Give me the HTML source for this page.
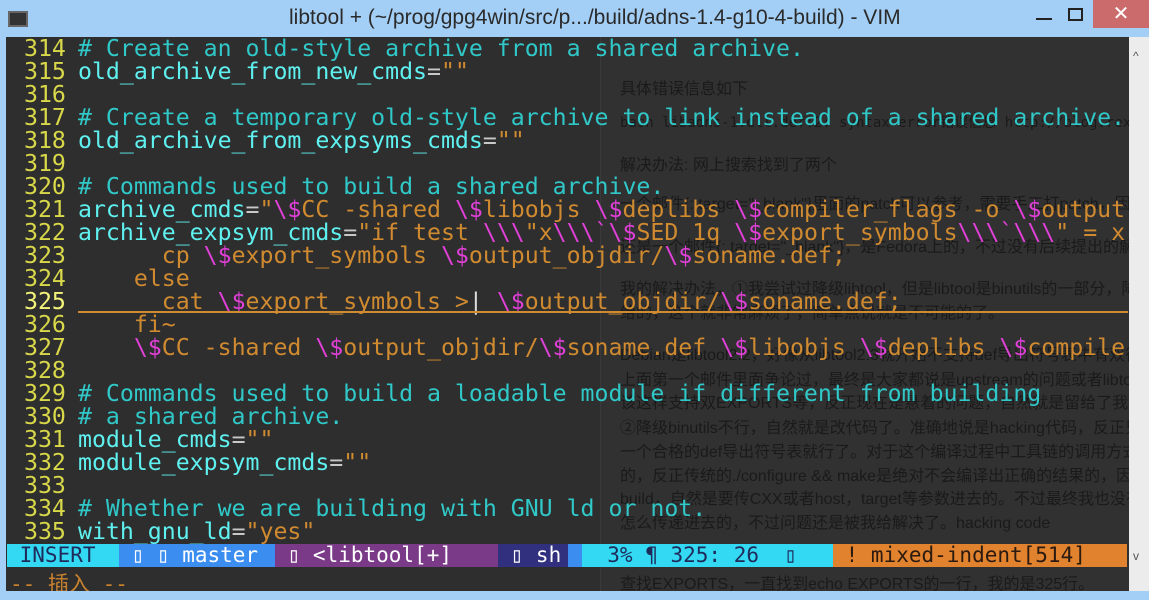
<!DOCTYPE html>
<html><head><meta charset="utf-8"><style>
*{margin:0;padding:0;box-sizing:border-box}
body{width:1149px;height:600px;overflow:hidden;background:#a3cff6;position:relative;font-family:"Liberation Sans","Noto Sans CJK SC",sans-serif}
.title{position:absolute;left:0;top:0;width:1149px;height:37px;background:#a3cff6}
.title .t{position:absolute;left:289px;top:6px;font-size:21px;color:#2a2a2a;white-space:nowrap}
.close{position:absolute;left:1093px;top:0;width:56px;height:28px;background:#cc6b6b;color:#fff;font-size:20px;text-align:center;line-height:28px}
.vim{position:absolute;left:6px;top:37px;width:1123px;height:554px;background:#2e2e2e;overflow:hidden}
.rbg{position:absolute;left:594px;top:0;width:529px;height:554px;background:#313131;border-left:1px solid #3a3a3a}
.scroll{position:absolute;left:1129px;top:37px;width:20px;height:554px;background:#ececec}
.bg{position:absolute;color:#1a1a1a;font-size:16px;white-space:nowrap;font-family:"Liberation Sans","Noto Sans CJK SC",sans-serif}
.code{position:absolute;left:0;top:0;font-family:"DejaVu Sans Mono",monospace;font-size:23.2px;line-height:23px;white-space:pre}
.ln{position:absolute;left:18px;width:50px;color:#d8d84a}
.tx{position:absolute;left:72px;color:#5ff0f0}
.c{color:#30c8c8}.s{color:#d08a30}.m{color:#e040d8}.w{color:#c8c8c8}
.st{position:absolute;top:507px;height:23px;font-family:"DejaVu Sans Mono",monospace;font-size:21px;line-height:23px;white-space:pre;overflow:hidden}
</style></head><body>
<div class="title">
<div style="position:absolute;left:8px;top:11px;width:20px;height:16px;background:#333;border:2px solid #666"></div>
<div class="t">libtool + (~/prog/gpg4win/src/p.../build/adns-1.4-g10-4-build) - VIM</div>
<div style="position:absolute;left:1036px;top:18px;width:16px;height:2px;background:#222"></div>
<div style="position:absolute;left:1068px;top:8px;width:15px;height:13px;border:2px solid #222"></div>
<div class="close">✕</div>
</div>
<div class="vim">
<div class="rbg"></div>
<div class="bg" style="left:614px;top:38px">具体错误信息如下</div>
<div class="bg" style="left:614px;top:75px;font-family:'DejaVu Sans Mono',monospace;font-size:14px">bash libadns-1.dll.def:2: syntax error错误信息 http://blog.rexdf.org MyBlog /</div>
<div class="bg" style="left:614px;top:114px">解决办法: 网上搜索找到了两个</div>
<div class="bg" style="left:614px;top:153px">一个邮件{: target="_blank"}里面的patch可以参考，需要手工打patch，因为行号似乎和</div>
<div class="bg" style="left:614px;top:196px">还是一个邮件{: target="_blank"}，是Fedora上的，不过没有后续提出的解决办法。</div>
<div class="bg" style="left:614px;top:238px">我的解决办法，①我尝试过降级libtool，但是libtool是binutils的一部分，降级binutils需要</div>
<div class="bg" style="left:614px;top:262px">给的，这个就非常麻烦了，简单点说就是不可能的了。</div>
<div class="bg" style="left:614px;top:304px">Debian是libtool2.2，好像从libtool2.3就开始不支持def导出符号表中有双行EXPORTS，这</div>
<div class="bg" style="left:614px;top:329px">上面第一个邮件里面争论过，最终是大家都说是upstream的问题或者libtool的错误，反</div>
<div class="bg" style="left:614px;top:352px">该这样支持双EXPORTS等，反正现在是悬着的问题，自然就是留给了我们编译用户了。</div>
<div class="bg" style="left:614px;top:377px">②降级binutils不行，自然就是改代码了。准确地说是hacking代码，反正只要欺骗libtool</div>
<div class="bg" style="left:614px;top:401px">一个合格的def导出符号表就行了。对于这个编译过程中工具链的调用方式的真的是没有</div>
<div class="bg" style="left:614px;top:425px">的，反正传统的./configure &amp;&amp; make是绝对不会编译出正确的结果的，因为是cross-</div>
<div class="bg" style="left:614px;top:448px">build，自然是要传CXX或者host，target等参数进去的。不过最终我也没有搞懂这些参</div>
<div class="bg" style="left:614px;top:472px">怎么传递进去的，不过问题还是被我给解决了。hacking code</div>
<div class="bg" style="left:614px;top:533px">查找EXPORTS，一直找到echo EXPORTS的一行，我的是325行。</div>
<div class="code">
<div class="ln" style="top:0">314</div><div class="tx c" style="top:0"># Create an old-style archive from a shared archive.</div>
<div class="ln" style="top:23px">315</div><div class="tx" style="top:23px">old_archive_from_new_cmds<span class="w">=</span><span class="s">""</span></div>
<div class="ln" style="top:46px">316</div>
<div class="ln" style="top:69px">317</div><div class="tx c" style="top:69px"># Create a temporary old-style archive to link instead of a shared archive.</div>
<div class="ln" style="top:92px">318</div><div class="tx" style="top:92px">old_archive_from_expsyms_cmds<span class="w">=</span><span class="s">""</span></div>
<div class="ln" style="top:115px">319</div>
<div class="ln" style="top:138px">320</div><div class="tx c" style="top:138px"># Commands used to build a shared archive.</div>
<div class="ln" style="top:161px">321</div><div class="tx" style="top:161px">archive_cmds<span class="w">=</span><span class="s">"<span class="m">\$</span>CC -shared <span class="m">\$</span>libobjs <span class="m">\$</span>deplibs <span class="m">\$</span>compiler_flags -o <span class="m">\$</span>output</span></div>
<div class="ln" style="top:184px">322</div><div class="tx" style="top:184px">archive_expsym_cmds<span class="w">=</span><span class="s">"if test <span class="m">\\\</span>"x<span class="m">\\\`\$</span>SED 1q <span class="m">\$</span>export_symbols<span class="m">\\\`\\\</span>" = x</span></div>
<div class="ln" style="top:207px">323</div><div class="tx s" style="top:207px">      cp <span class="m">\$</span>export_symbols <span class="m">\$</span>output_objdir/<span class="m">\$</span>soname.def;</div>
<div class="ln" style="top:230px">324</div><div class="tx s" style="top:230px">    else</div>
<div class="ln" style="top:253px;color:#f4f47a">325</div><div class="tx s" style="top:253px">      cat <span class="m">\$</span>export_symbols &gt;<span style="color:#ddd">|</span> <span class="m">\$</span>output_objdir/<span class="m">\$</span>soname.def;</div>
<div style="position:absolute;left:72px;top:274px;width:1050px;height:2px;background:#d08a30"></div>
<div class="ln" style="top:276px">326</div><div class="tx s" style="top:276px">    fi~</div>
<div class="ln" style="top:299px">327</div><div class="tx s" style="top:299px">    <span class="m">\$</span>CC -shared <span class="m">\$</span>output_objdir/<span class="m">\$</span>soname.def <span class="m">\$</span>libobjs <span class="m">\$</span>deplibs <span class="m">\$</span>compile</div>
<div class="ln" style="top:322px">328</div>
<div class="ln" style="top:345px">329</div><div class="tx c" style="top:345px"># Commands used to build a loadable module if different from building</div>
<div class="ln" style="top:368px">330</div><div class="tx c" style="top:368px"># a shared archive.</div>
<div class="ln" style="top:391px">331</div><div class="tx" style="top:391px">module_cmds<span class="w">=</span><span class="s">""</span></div>
<div class="ln" style="top:414px">332</div><div class="tx" style="top:414px">module_expsym_cmds<span class="w">=</span><span class="s">""</span></div>
<div class="ln" style="top:437px">333</div>
<div class="ln" style="top:460px">334</div><div class="tx c" style="top:460px"># Whether we are building with GNU ld or not.</div>
<div class="ln" style="top:483px">335</div><div class="tx" style="top:483px">with_gnu_ld<span class="w">=</span><span class="s">"yes"</span></div>
</div>
<div class="st" style="left:1px;width:112px;background:#33d8f2;color:#1e2a5a"> INSERT</div>
<div class="st" style="left:113px;width:156px;background:#3b8ef0;color:#fff"> ▯ ▯ master</div>
<div class="st" style="left:269px;width:223px;background:#7a3a88;color:#fff"> ▯ &lt;libtool[+]</div>
<div class="st" style="left:492px;width:70px;background:#30307e;color:#fff"> ▯ sh</div>
<div class="st" style="left:562px;width:14px;background:#3b8ef0"></div>
<div class="st" style="left:576px;width:251px;background:#33d8f2;color:#1e2a5a">  3% ¶ 325: 26  ▯</div>
<div class="st" style="left:827px;width:294px;background:#e0822e;color:#2a1a10"> ! mixed-indent[514]</div>
<div style="position:absolute;left:4px;top:531px;font-family:'DejaVu Sans Mono','Noto Sans CJK SC',monospace;font-size:21px;color:#c8822e;white-space:pre">-- 插入 --</div>
</div>
<div class="scroll"><div style="position:absolute;left:4px;top:12px;color:#555;font-size:12px">^</div><div style="position:absolute;left:4px;top:512px;color:#555;font-size:12px">v</div></div>
</body></html>
